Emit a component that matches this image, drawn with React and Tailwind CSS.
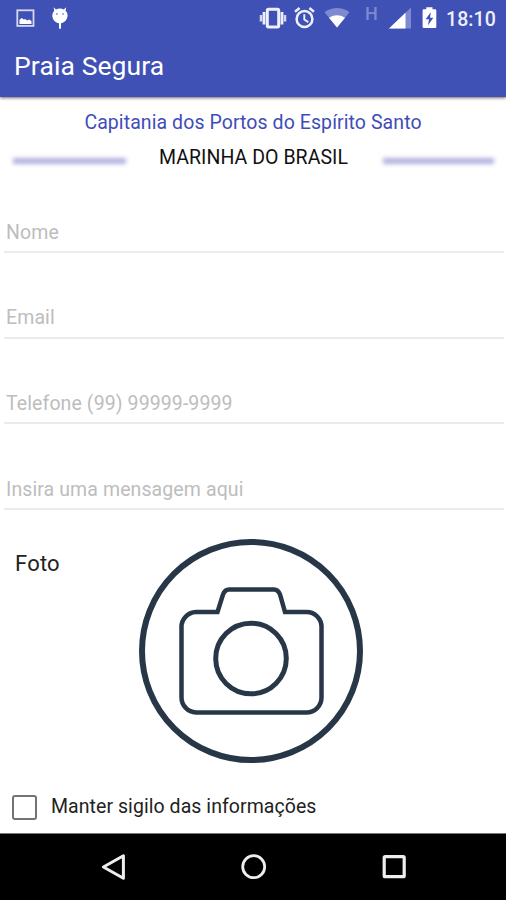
import { useState } from "react";

const fields = [
  { name: "nome", type: "text", placeholder: "Nome" },
  { name: "email", type: "email", placeholder: "Email" },
  { name: "telefone", type: "tel", placeholder: "Telefone (99) 99999-9999" },
  { name: "mensagem", type: "text", placeholder: "Insira uma mensagem aqui" },
];

function StatusBar() {
  return (
    <div className="flex h-9 items-start pl-4 pr-[11px] pt-[6px] text-[#eef0fc]">
      <svg className="h-6 w-[19px]" viewBox="0 0 19 24" fill="none">
        <rect x="1.3" y="4.3" width="16.2" height="15.6" stroke="currentColor" strokeWidth="1.8" opacity=".85" />
        <path d="M3.500 18v-4l2-2 2.500 1.500 1-.5 2.500 1.500 1.500-1 2.500 1.500v3z" fill="#fff" />
      </svg>
      <svg className="ml-4 h-6 w-[18px]" viewBox="0 0 18 24">
        <path
          d="M2.6 1.2 5 3.4Q9 1.6 12.8 3.4L15.2 1.2 14.6 4.8Q16.8 7 16.6 9.5C16.4 14 13 17 10 17.2V21.5Q10 23 9 23T8 21.5V17.2C4.500 17 1.400 14 1.300 9.500Q1.200 7 3.200 4.800Z"
          fill="#fff"
        />
        <circle cx="5.8" cy="8" r="1" fill="#8f9bd6" />
        <circle cx="12" cy="8" r="1" fill="#8f9bd6" />
      </svg>
      {/* vibrate */}
      <svg className="ml-auto h-6 w-7" viewBox="0 0 28 24" fill="none">
        <rect x="8.300" y="3.300" width="11.400" height="17.600" rx="1.200" stroke="currentColor" strokeWidth="3" />
        <path d="M5 6v12.500M23 6v12.500" stroke="currentColor" strokeWidth="2.800" />
        <path d="M2 9v6.500M26 9v6.500" stroke="currentColor" strokeWidth="2.500" opacity=".85" />
      </svg>
      {/* alarm */}
      <svg className="ml-[7px] h-6 w-[21px]" viewBox="0 0 21 24" fill="none" stroke="currentColor">
        <circle cx="10.500" cy="13" r="7.900" strokeWidth="2.500" />
        <path d="M10.300 8.300v5.200l4 2.600" strokeWidth="1.900" />
        <path d="M1 5.800 5.600 2M20 5.800 15.400 2" strokeWidth="2.400" />
      </svg>
      {/* wifi */}
      <svg className="ml-[9px] h-6 w-[26px]" viewBox="0 0 26 24">
        <path d="M13 21.500.500 6.200Q13-2 25.500 6.200Z" fill="#7d8ad0" />
        <path d="M13 21.500 5 11.700Q13 7 21 11.700Z" fill="#fff" />
      </svg>
      <span className="ml-[15px] w-3 text-[18px] font-medium leading-[15px] text-[#7d8ad0]">H</span>
      {/* signal strength */}
      <svg className="ml-[12px] h-6 w-[22px]" viewBox="0 0 22 24">
        <path d="M0 22.500 22 1.500V22.500Z" fill="#7d8ad0" />
        <path d="M0 22.500 16.500 6.700V22.500Z" fill="#fff" />
      </svg>
      {/* charging battery */}
      <svg className="ml-[11px] h-6 w-[15px]" viewBox="0 0 15 24">
        <path
          d="M4.300 1.200H10.500V3.300H13.200Q14.300 3.300 14.300 4.500V20.800Q14.300 22 13.200 22H1.700Q.600 22 .600 20.800V4.500Q.600 3.300 1.700 3.300H4.300Z"
          fill="#fff"
        />
        <path d="M8.800 6.300 3.600 13.300H7L6 19.300 11.400 11.800H8Z" fill="#3f51b5" />
      </svg>
      <span className="ml-[9px] w-[49px] whitespace-nowrap text-[19.500px] font-medium leading-[27px] tracking-[0.1px]">
        18:10
      </span>
    </div>
  );
}

function CameraIcon() {
  return (
    <svg className="h-[226px] w-[226px]" viewBox="0 0 226 226" fill="none" stroke="#283748">
      <circle cx="113" cy="113" r="109" strokeWidth="6" />
      <path
        d="M43.500 90A15 15 0 0 1 58 74H79.500L85 56.500Q87 51.500 91 51.500H136Q140 51.500 142 56.500L147 74H168.500A15 15 0 0 1 183.500 90V159.500A15 15 0 0 1 168.500 174.500H58A15 15 0 0 1 43.500 159.500Z"
        strokeWidth="4.500"
      />
      <circle cx="113" cy="120.500" r="35.300" strokeWidth="5" />
    </svg>
  );
}

function NavBar() {
  return (
    <nav className="flex h-[67px] items-center justify-between border-t border-[#777] bg-black pl-[100px] pr-[98px]">
      <button type="button" aria-label="Voltar">
        <svg className="h-7 w-7" viewBox="0 0 28 28" fill="none" stroke="#eee" strokeWidth="3">
          <path d="M23.400 2.800V25.200L3.400 14Z" strokeLinejoin="round" />
        </svg>
      </button>
      <button type="button" aria-label="Início">
        <svg className="h-7 w-7" viewBox="0 0 28 28" fill="none" stroke="#eee" strokeWidth="2.800">
          <circle cx="13.700" cy="13.700" r="11" />
        </svg>
      </button>
      <button type="button" aria-label="Recentes">
        <svg className="h-7 w-7" viewBox="0 0 28 28" fill="none" stroke="#eee" strokeWidth="3.200">
          <rect x="4.200" y="3.700" width="20" height="20" rx="1" />
        </svg>
      </button>
    </nav>
  );
}

export default function App() {
  const [values, setValues] = useState({});
  const [secret, setSecret] = useState(false);

  const handleChange = (e) => {
    setValues({ ...values, [e.target.name]: e.target.value });
  };

  return (
    <div className="flex h-[900px] w-[506px] flex-col overflow-hidden bg-white font-[Roboto,sans-serif]">
      <header className="z-10 h-[97px] shrink-0 bg-[#3f51b5] text-white shadow-[0_1px_3px_rgba(60,40,30,0.7)]">
        <StatusBar />
        <h1 className="pl-[14px] pt-[14px] text-[26.500px] leading-8 tracking-[0.1px]">
          Praia Segura
        </h1>
      </header>

      <main className="flex flex-1 flex-col">
        <h2 className="mt-[14px] text-center text-[19.500px] leading-6 tracking-[0.08px] text-[#3f4db8]">
          Capitania dos Portos do Espírito Santo
        </h2>
        <div className="mt-[10px] flex h-6 items-center justify-between pl-[13px] pr-3">
          <span className="mt-[7px] h-[6px] w-[113px] bg-[#b3b1df] blur-[2px]" />
          <span className="mr-[2px] pt-[2px] text-[19.500px] leading-6 tracking-[0.05px] text-[#111]">
            MARINHA DO BRASIL
          </span>
          <span className="mt-[7px] h-[6px] w-[111px] bg-[#b3b1df] blur-[2px]" />
        </div>

        <form className="mt-[44px] flex flex-col gap-[45.700px] pl-1 pr-[2px]">
          {fields.map((field) => (
            <input
              key={field.name}
              name={field.name}
              type={field.type}
              placeholder={field.placeholder}
              value={values[field.name] || ""}
              onChange={handleChange}
              className="h-10 border-b-2 border-[#ebebeb] pl-[2px] text-[19.500px] tracking-[0.1px] outline-none placeholder:text-[#bdbdbd]"
            />
          ))}
        </form>

        <div className="mt-[28px] flex">
          <span className="ml-[15px] mt-[12px] w-[123px] text-[22px] leading-[28px] tracking-[0.2px] text-[#222]">
            Foto
          </span>
          <button type="button" aria-label="Adicionar foto">
            <CameraIcon />
          </button>
        </div>

        <label className="mt-auto mb-[12px] flex items-center pl-3">
          <input
            type="checkbox"
            checked={secret}
            onChange={(e) => setSecret(e.target.checked)}
            className="h-[25px] w-[25px] appearance-none rounded-[3px] border-2 border-[#737373] checked:bg-[#3f51b5]"
          />
          <span className="ml-[14px] text-[19.500px] leading-[28px] tracking-[0.06px] text-[#222]">
            Manter sigilo das informações
          </span>
        </label>
      </main>

      <NavBar />
    </div>
  );
}
